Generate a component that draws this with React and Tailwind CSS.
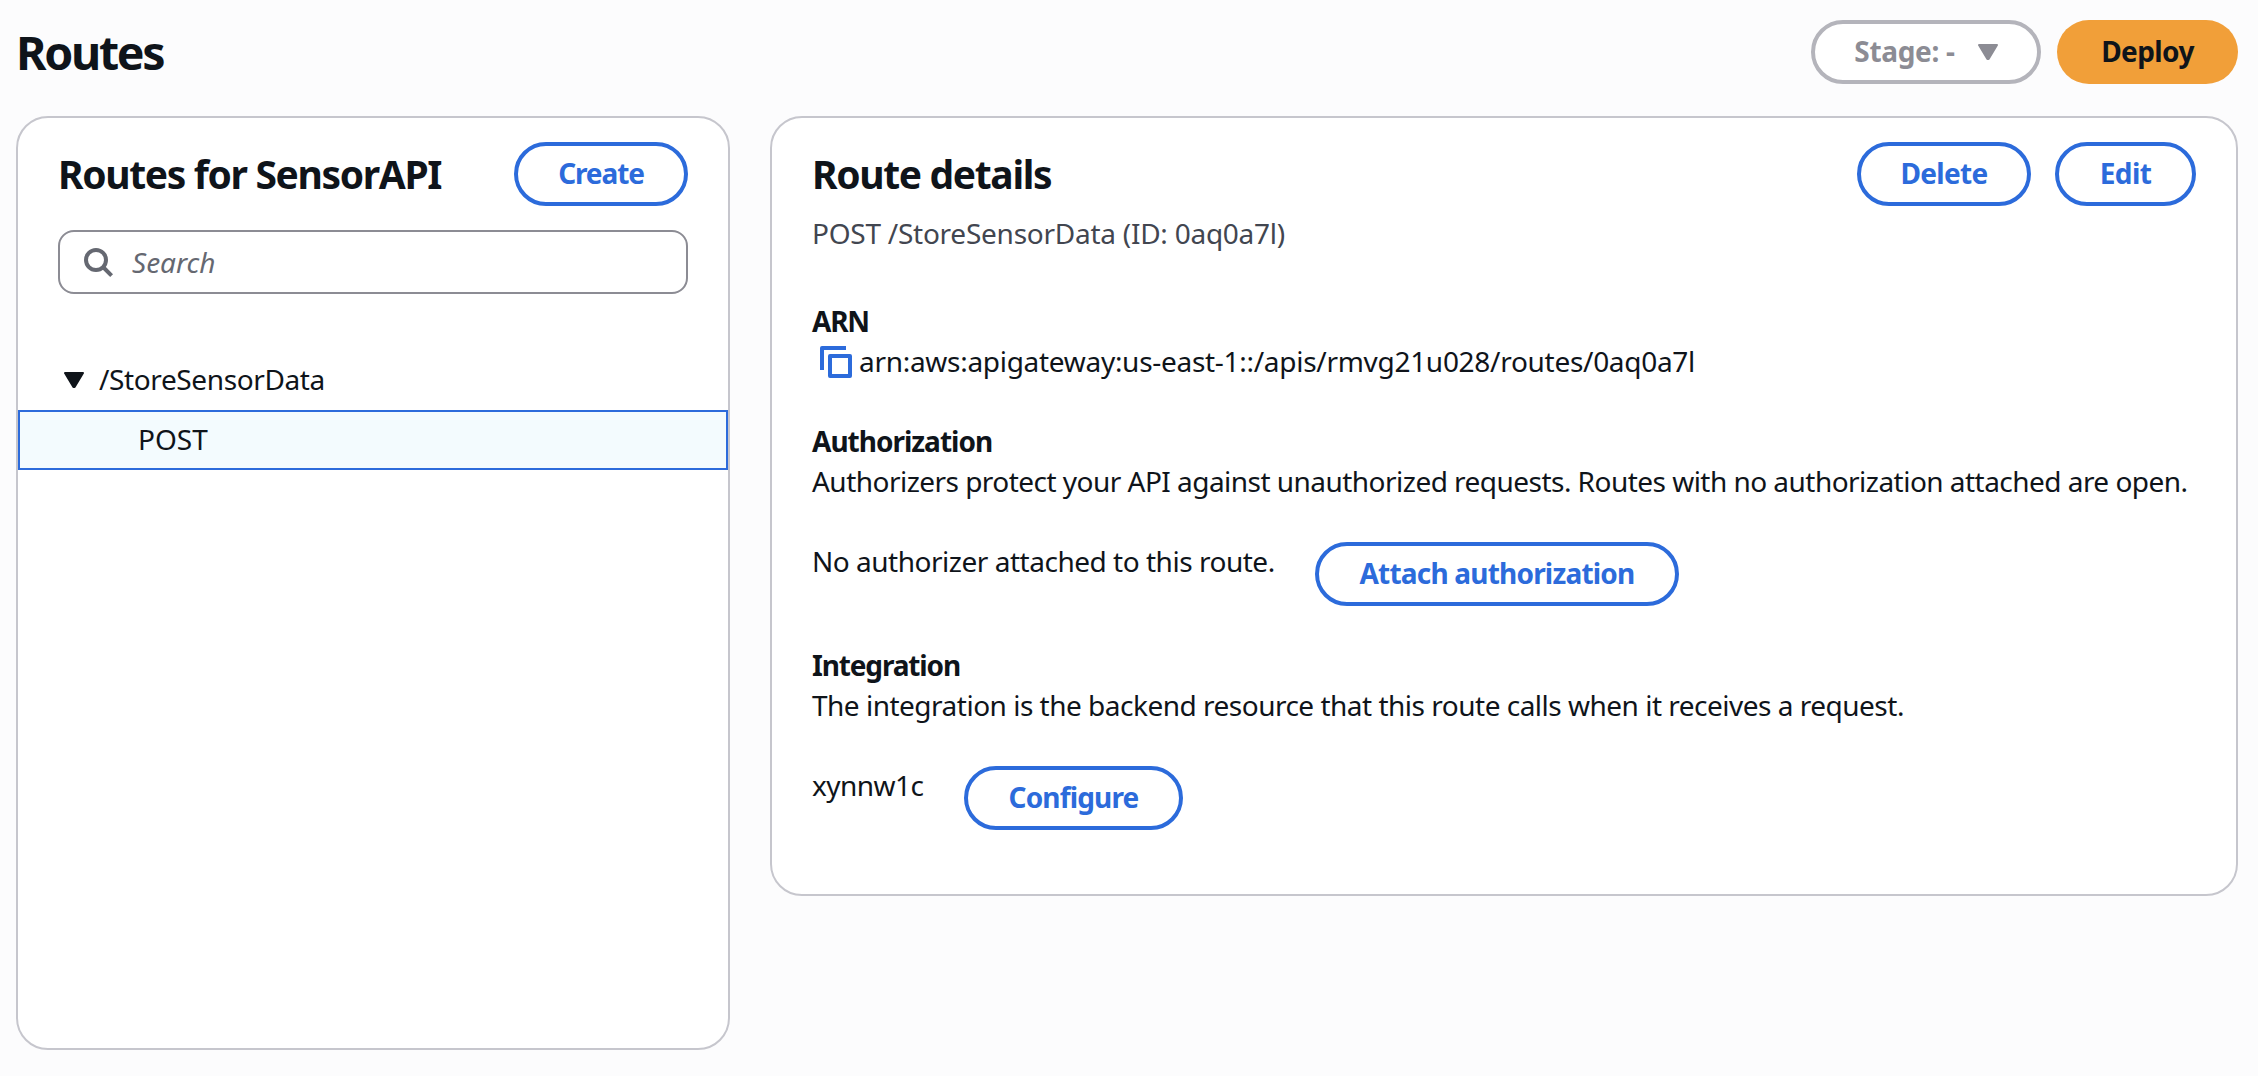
const buttonBase =
  "flex h-16 shrink-0 items-center justify-center rounded-full pb-0.5 text-[28px] font-bold whitespace-nowrap";

function OutlineButton({ className, children }) {
  return (
    <button type="button" className={`${buttonBase} border-4 border-[#2c6bdb] bg-white text-[#2c6bdb] ${className}`}>
      {children}
    </button>
  );
}

function Caret({ className }) {
  return (
    <svg viewBox="0 0 20 16" className={`h-4 w-5 shrink-0 ${className}`} fill="currentColor" stroke="currentColor" strokeWidth="2" strokeLinejoin="round">
      <path d="M1 1H19L10.6 15H9.4Z" />
    </svg>
  );
}

function SearchIcon() {
  return (
    <svg viewBox="0 0 32 32" className="size-8 shrink-0" fill="none" stroke="currentColor" strokeWidth="4">
      <circle cx="14" cy="14" r="10" />
      <path d="M21 21L29.6 29.6" />
    </svg>
  );
}

function CopyIcon() {
  return (
    <svg viewBox="0 0 32 32" className="mt-0.5 size-8 shrink-0 text-[#2c6bdb]" fill="none" stroke="currentColor" strokeWidth="4" strokeLinejoin="round">
      <path d="M2 24V2H26" />
      <path d="M10 10H30V30H10Z" />
    </svg>
  );
}

function RoutesPanel() {
  return (
    <section className="h-[934px] w-[714px] shrink-0 rounded-[32px] border-2 border-[#c6c6cd] bg-white pt-6">
      <div className="px-10">
        <div className="flex h-16 items-center justify-between">
          <h2 className="text-[39px] font-bold tracking-[-1.35px] whitespace-nowrap">Routes for SensorAPI</h2>
          <OutlineButton className="w-[174px] tracking-[-1.1px]">Create</OutlineButton>
        </div>
        <div className="mt-6 flex h-16 items-center gap-[18px] rounded-2xl border-2 border-[#8c8c94] px-[22px] text-[#656871]">
          <SearchIcon />
          <span className="text-[28px] italic">Search</span>
        </div>
      </div>
      <ul className="mt-14 text-[28px] leading-[60px]">
        <li className="flex h-[60px] items-center gap-[15px] pb-0.5 pl-[46px] tracking-[-0.38px]">
          <Caret className="mt-0.5" />
          /StoreSensorData
        </li>
        <li className="flex h-[60px] items-center border-2 border-[#2c6bdb] bg-[#f3fbfe] pb-0.5 pl-[118px]">POST</li>
      </ul>
    </section>
  );
}

function RouteDetailsPanel() {
  return (
    <section className="h-[780px] w-[1468px] shrink-0 rounded-[32px] border-2 border-[#c6c6cd] bg-white px-10 pt-6 text-[28px] leading-10 whitespace-nowrap">
      <div className="flex h-16 items-center justify-between">
        <h2 className="text-[39px] font-bold tracking-[-1.35px]">Route details</h2>
        <div className="flex gap-6">
          <OutlineButton className="w-[174px] tracking-[-0.7px]">Delete</OutlineButton>
          <OutlineButton className="w-[141px] tracking-[-0.6px]">Edit</OutlineButton>
        </div>
      </div>
      <p className="mt-[7px] tracking-[-0.25px] text-[#424650]">POST /StoreSensorData (ID: 0aq0a7l)</p>

      <h3 className="mt-12 font-bold tracking-[-1.2px]">ARN</h3>
      <div className="flex items-center gap-[7px] pl-2">
        <CopyIcon />
        <span className="tracking-[-0.29px]">arn:aws:apigateway:us-east-1::/apis/rmvg21u028/routes/0aq0a7l</span>
      </div>

      <h3 className="mt-10 font-bold tracking-[-1px]">Authorization</h3>
      <p className="tracking-[-0.53px]">
        Authorizers protect your API against unauthorized requests. Routes with no authorization attached are open.
      </p>
      <div className="mt-10 flex items-start">
        <p className="w-[503px] tracking-[-0.48px]">No authorizer attached to this route.</p>
        <OutlineButton className="mt-px w-[364px] tracking-[-0.8px]">Attach authorization</OutlineButton>
      </div>

      <h3 className="mt-[39px] font-bold tracking-[-1.15px]">Integration</h3>
      <p className="tracking-[-0.5px]">
        The integration is the backend resource that this route calls when it receives a request.
      </p>
      <div className="mt-10 flex items-start">
        <p className="w-[152px] tracking-[-0.55px]">xynnw1c</p>
        <OutlineButton className="mt-px w-[219px] tracking-[-0.85px]">Configure</OutlineButton>
      </div>
    </section>
  );
}

export default function App() {
  return (
    <main className="h-[1076px] w-[2258px] overflow-hidden bg-[#fcfcfd] pt-5 pr-5 pl-4 font-['Noto_Sans',sans-serif] text-[#0f141a]">
      <header className="flex h-16 items-center justify-between">
        <h1 className="pt-0.5 text-[46.5px] font-bold tracking-[-2.3px]">Routes</h1>
        <div className="flex gap-4">
          <button type="button" className={`${buttonBase} w-[230px] gap-[23px] border-4 border-[#b4b4bb] bg-white tracking-[-0.3px] text-[#8c8c94]`}>
            Stage: -
            <Caret className="mt-0.5" />
          </button>
          <button type="button" className={`${buttonBase} w-[181px] bg-[#f19f39] tracking-[-0.6px]`}>
            Deploy
          </button>
        </div>
      </header>
      <div className="mt-8 flex items-start justify-between">
        <RoutesPanel />
        <RouteDetailsPanel />
      </div>
    </main>
  );
}
